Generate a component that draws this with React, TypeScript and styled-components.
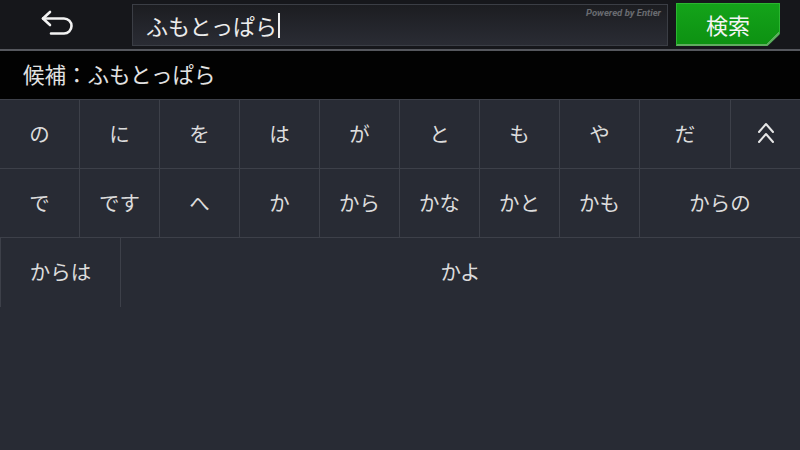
import React from "react";
import styled, { createGlobalStyle } from "styled-components";

const Global = createGlobalStyle`
  html, body { margin: 0; padding: 0; background: #282b34; }
  body { width: 800px; height: 450px; overflow: hidden; font-family: "Noto Sans CJK JP", "Noto Sans", sans-serif; }
`;

const Screen = styled.div`
  width: 800px;
  height: 450px;
  display: flex;
  flex-direction: column;
  background: #282b34;
`;

const TopBar = styled.div`
  height: 49px;
  display: flex;
  align-items: flex-start;
  background: #16171b;
  border-bottom: 2px solid #55575d;
  box-sizing: content-box;
`;

const BackButton = styled.div`
  width: 116px;
  height: 46px;
  display: flex;
  align-items: center;
  justify-content: center;
`;

const InputBox = styled.div`
  position: relative;
  margin-top: 4px;
  margin-left: 16px;
  width: 536px;
  height: 42px;
  box-sizing: border-box;
  border: 1px solid #3b3e45;
  background: linear-gradient(#1c1d21, #2a2c34);
  display: flex;
  align-items: center;
  padding-left: 13px;
  color: #ececec;
  font-size: 22px;
`;

const Cursor = styled.span`
  display: inline-block;
  width: 2px;
  height: 25px;
  background: #f0f0f0;
  margin-left: 1px;
`;

const Powered = styled.span`
  position: absolute;
  top: 2px;
  right: 6px;
  font-family: "Roboto", "Liberation Sans", sans-serif;
  font-style: italic;
  font-weight: 700;
  font-size: 9.5px;
  color: #696b70;
`;

const SearchButton = styled.div`
  position: relative;
  margin-top: 3px;
  margin-left: 8px;
  width: 104px;
  height: 43px;
  box-sizing: border-box;
  background: linear-gradient(#14a31a, #0d9212);
  border: 1px solid #2bb631;
  border-bottom: 2px solid #5fae5f;
  color: #f4f4f4;
  font-size: 22px;
  display: flex;
  align-items: center;
  justify-content: center;
  clip-path: polygon(0 0, 100% 0, 100% 72%, 88% 100%, 0 100%);
`;

const Corner = styled.div`
  position: absolute;
  right: 0;
  bottom: 0;
  width: 12px;
  height: 12px;
  background: linear-gradient(135deg, transparent 50%, #8fbf8f 50%);
  opacity: 0.6;
`;

const CandidateBar = styled.div`
  height: 48px;
  background: #020202;
  color: #e2e2e2;
  font-size: 21.5px;
  display: flex;
  align-items: center;
  padding-left: 23px;
  padding-bottom: 3px;
  box-sizing: border-box;
`;

const Keyboard = styled.div`
  border-top: 1px solid #3d4049;
  display: flex;
  flex-direction: column;
`;

const Row = styled.div<{ $last?: boolean }>`
  display: flex;
  height: 69px;
  box-sizing: border-box;
  border-bottom: ${(p) => (p.$last ? "none" : "1px solid #3d4049")};
`;

const Key = styled.div<{ $w: number; $edge?: boolean }>`
  width: ${(p) => p.$w}px;
  flex: none;
  box-sizing: border-box;
  border-right: ${(p) => (p.$edge ? "none" : "1px solid #3d4049")};
  display: flex;
  align-items: center;
  justify-content: center;
  padding-bottom: 3px;
  color: #dcdcdc;
  font-size: 20.5px;
`;

const FirstKey = styled(Key)`
  border-left: 1px solid #3d4049;
`;

const BackIcon = () => (
  <svg width="40" height="28" viewBox="0 0 40 28" fill="none" stroke="#f2f2f2" strokeWidth="2.6" strokeLinecap="round" strokeLinejoin="round">
    <path d="M12 3 L5 9.5 L12 16" />
    <path d="M5 9.5 H26 a7.5 7.5 0 0 1 0 15 H13" />
  </svg>
);

const UpIcon = () => (
  <svg width="18" height="22" viewBox="0 0 18 22" fill="none" stroke="#e6e6e6" strokeWidth="2" strokeLinecap="round" strokeLinejoin="round">
    <path d="M2 10 L9 2 L16 10" />
    <path d="M2 20 L9 12 L16 20" />
  </svg>
);

const row1 = ["の", "に", "を", "は", "が", "と", "も", "や"];
const row2 = ["で", "です", "へ", "か", "から", "かな", "かと", "かも"];

export default function App() {
  return (
    <>
      <Global />
      <Screen>
        <TopBar>
          <BackButton>
            <BackIcon />
          </BackButton>
          <InputBox>
            ふもとっぱら<Cursor />
            <Powered>Powered by Entier</Powered>
          </InputBox>
          <SearchButton>
            検索
            <Corner />
          </SearchButton>
        </TopBar>
        <CandidateBar>候補：ふもとっぱら</CandidateBar>
        <Keyboard>
          <Row>
            {row1.map((k) => (
              <Key key={k} $w={80}>{k}</Key>
            ))}
            <Key $w={91}>だ</Key>
            <Key $w={69} $edge>
              <UpIcon />
            </Key>
          </Row>
          <Row>
            {row2.map((k) => (
              <Key key={k} $w={80}>{k}</Key>
            ))}
            <Key $w={160} $edge>からの</Key>
          </Row>
          <Row $last>
            <FirstKey $w={121}>からは</FirstKey>
            <Key $w={679} $edge>かよ</Key>
          </Row>
        </Keyboard>
      </Screen>
    </>
  );
}
